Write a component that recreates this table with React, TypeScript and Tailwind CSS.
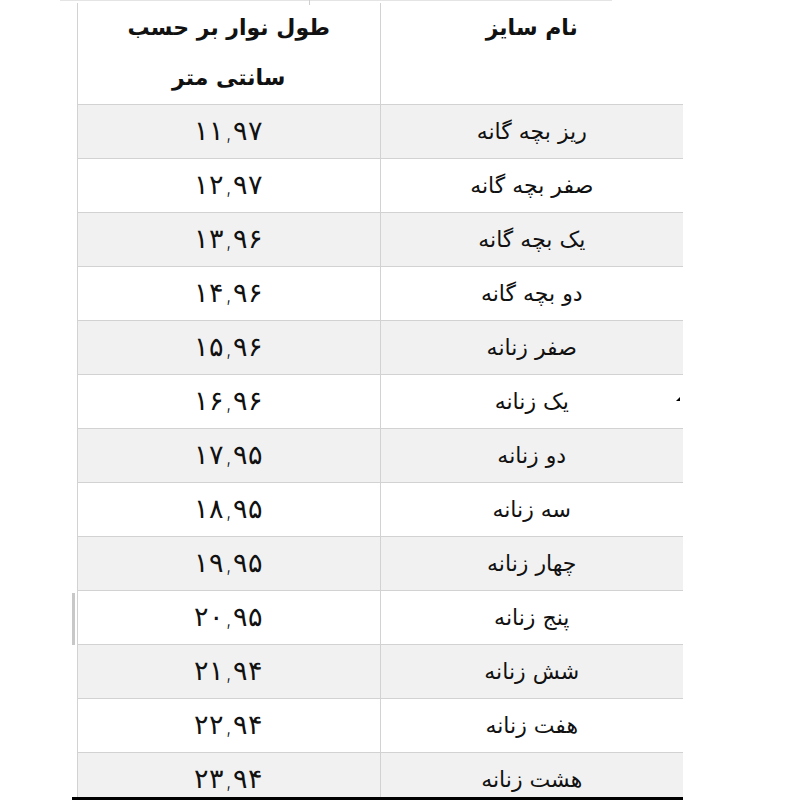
const rows = [
  { name: "ریز بچه گانه", len: "۱۱,۹۷" },
  { name: "صفر بچه گانه", len: "۱۲,۹۷" },
  { name: "یک بچه گانه", len: "۱۳,۹۶" },
  { name: "دو بچه گانه", len: "۱۴,۹۶" },
  { name: "صفر زنانه", len: "۱۵,۹۶" },
  { name: "یک زنانه", len: "۱۶,۹۶" },
  { name: "دو زنانه", len: "۱۷,۹۵" },
  { name: "سه زنانه", len: "۱۸,۹۵" },
  { name: "چهار زنانه", len: "۱۹,۹۵" },
  { name: "پنج زنانه", len: "۲۰,۹۵" },
  { name: "شش زنانه", len: "۲۱,۹۴" },
  { name: "هفت زنانه", len: "۲۲,۹۴" },
  { name: "هشت زنانه", len: "۲۳,۹۴" },
];

export default function App() {
  return (
    <div className="relative w-[800px] h-[800px] bg-white overflow-hidden font-['DejaVu_Sans',sans-serif] text-[#111]">
      {/* faint scan edge at the top */}
      <div className="absolute left-[60px] top-0 w-[552px] h-px bg-[#e4e4e4]" />
      <div className="absolute left-[309px] top-0 w-px h-[5px] bg-[#cfcfcf]" />
      {/* scroll marker on the left */}
      <div className="absolute left-[72px] top-[593px] w-[3px] h-[52px] bg-[#c8c8c8]" />
      {/* tiny mark on the right */}
      <div className="absolute left-[676px] top-[397px] w-[4px] h-[4px] bg-black [clip-path:polygon(100%_0,100%_100%,0_100%)]" />

      <div className="flex flex-col h-full">
        <div className="h-[797px] overflow-hidden pl-[77px] pt-[3px]">
          <div dir="rtl" className="w-[606px] border-l border-[#d2d2d2]">
            {/* header */}
            <div className="grid grid-cols-2 h-[102px] border-b border-[#d2d2d2] font-bold text-[22px]">
              <div className="text-center leading-[50px]">نام سایز</div>
              <div className="text-center leading-[50px] border-r border-[#d2d2d2]">
                طول نوار بر حسب
                <br />
                سانتی متر
              </div>
            </div>
            {rows.map((r, i) => (
              <div
                key={i}
                className={
                  "grid grid-cols-2 h-[54px] border-b border-[#d2d2d2] " +
                  (i % 2 === 0 ? "bg-[#f1f1f1]" : "bg-white")
                }
              >
                <div className="flex items-center justify-center text-[22px]">{r.name}</div>
                <div className="flex items-center justify-center border-r border-[#d2d2d2] text-[27px] font-light">
                  {r.len}
                </div>
              </div>
            ))}
          </div>
        </div>
        <div className="ml-[72px] w-[611px] h-[3px] bg-black" />
      </div>
    </div>
  );
}
